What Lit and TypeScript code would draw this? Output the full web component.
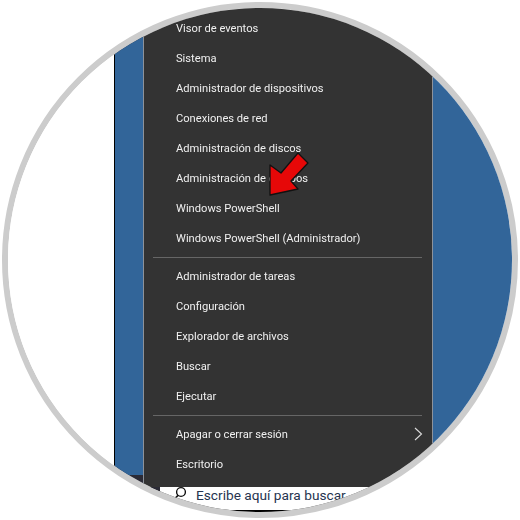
import { html, css, LitElement, svg } from "lit";
import { customElement } from "lit/decorators.js";

const TOP_ITEMS = [
  "Visor de eventos",
  "Sistema",
  "Administrador de dispositivos",
  "Conexiones de red",
  "Administración de discos",
  "Administración de equipos",
  "Windows PowerShell",
  "Windows PowerShell (Administrador)",
];
const MIDDLE_ITEMS = [
  "Administrador de tareas",
  "Configuración",
  "Explorador de archivos",
  "Buscar",
  "Ejecutar",
];

@customElement("app-root")
export class AppRoot extends LitElement {
  static override styles = css`
    :host {
      display: block;
      width: 520px;
      height: 520px;
      background: #fff;
      overflow: hidden;
      font-family: Roboto, "Open Sans", sans-serif;
    }
    .circle {
      position: relative;
      box-sizing: border-box;
      width: 516px;
      height: 516px;
      margin: 2px;
      border: 6px solid #cccccc;
      border-radius: 50%;
      overflow: hidden;
      display: flex;
      background: #fff;
    }
    .gutter {
      width: 106px;
      flex: none;
      background: #fff;
      border-right: 1px solid #000;
    }
    .strip {
      width: 28px;
      flex: none;
      display: flex;
      flex-direction: column;
      background: #2b2b36;
    }
    .strip__blue {
      height: 467px;
      background: #326599;
    }
    .center {
      width: 290px;
      flex: none;
      display: flex;
      flex-direction: column;
    }
    .menu {
      box-sizing: border-box;
      height: 479px;
      padding: 5px 0 7px;
      background: #333333;
      border-left: 1px solid #8d929a;
      border-right: 1px solid #8d929a;
    }
    .item {
      position: relative;
      height: 30px;
      display: flex;
      align-items: center;
      padding-left: 32px;
      color: #f0f0f0;
      font-size: 11.15px;
      filter: blur(0.25px);
    }
    .item svg {
      position: absolute;
      right: 9px;
      top: 8px;
    }
    .sep {
      height: 1px;
      margin: 4px 10px 3px 9px;
      background: #666666;
    }
    .taskbar {
      flex: 1;
      display: flex;
      background: #000;
    }
    .taskbar__edge {
      width: 17px;
      flex: none;
      background: #2b2b36;
    }
    .search {
      flex: 1;
      box-sizing: border-box;
      height: 23px;
      display: flex;
      align-items: flex-start;
      gap: 9px;
      padding-left: 13px;
      background: #fff;
      color: #26344f;
      font-size: 13.7px;
      line-height: 17px;
    }
    .search svg {
      margin-top: -1px;
      flex: none;
    }
    .right {
      flex: 1;
      background: #326599;
    }
    .arrow {
      position: absolute;
      left: 255px;
      top: 140px;
    }
  `;

  private row(label: string, chevron = false) {
    return html`<div class="item">
      ${label}
      ${chevron
        ? html`<svg width="9" height="14" viewBox="0 0 9 14" fill="none">
            <path d="M1 1l6.5 6L1 13" stroke="#dcdcdc" stroke-width="1.1" />
          </svg>`
        : null}
    </div>`;
  }

  override render() {
    return html`
      <div class="circle">
        <div class="gutter"></div>
        <div class="strip"><div class="strip__blue"></div></div>
        <div class="center">
          <div class="menu">
            ${TOP_ITEMS.map((label) => this.row(label))}
            <div class="sep"></div>
            ${MIDDLE_ITEMS.map((label) => this.row(label))}
            <div class="sep"></div>
            ${this.row("Apagar o cerrar sesión", true)}
            ${this.row("Escritorio")}
          </div>
          <div class="taskbar">
            <div class="taskbar__edge"></div>
            <div class="search">
              <svg width="14" height="14" viewBox="0 0 14 14" fill="none">
                <circle cx="8" cy="6" r="4.4" stroke="#111" stroke-width="1.4" />
                <path d="M5 9.4L1.5 13" stroke="#111" stroke-width="1.6" />
              </svg>
              <span>Escribe aquí para buscar</span>
            </div>
          </div>
        </div>
        <div class="right"></div>
        <svg class="arrow" width="60" height="60" viewBox="0 0 60 60">
          ${svg`<polygon
            points="7,47 7,17 18,25 35,5 45,15 28,33 35,41"
            fill="#e60808"
            stroke="#111"
            stroke-width="1.3"
            stroke-linejoin="round"
          />`}
        </svg>
      </div>
    `;
  }
}
